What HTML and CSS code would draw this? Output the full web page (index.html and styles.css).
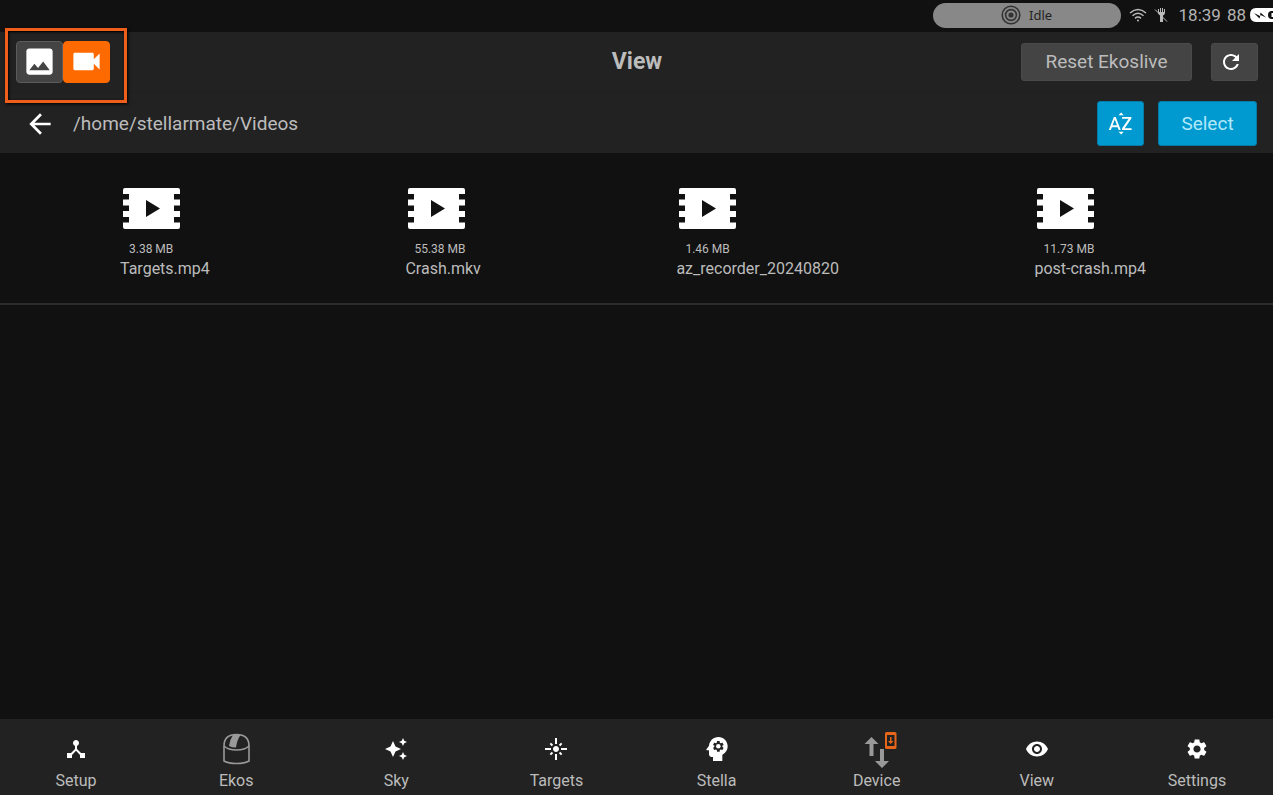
FILE: index.html
```html
<!DOCTYPE html>
<html lang="en">
<head>
<meta charset="utf-8">
<meta name="viewport" content="width=device-width, initial-scale=1">
<title>View</title>
<link rel="stylesheet" href="styles.css">
</head>
<body>
<svg class="defs" aria-hidden="true">
  <symbol id="film" viewBox="0 0 57 41">
    <path fill-rule="evenodd" d="M2 0H55Q57 0 57 2V6H51V11.500H57V17.500H51V23H57V29H51V34.500H57V39Q57 41 55 41H2Q0 41 0 39V34.500H6V29H0V23H6V17.500H0V11.500H6V6H0V2Q0 0 2 0ZM23 12V29L37 20.500Z"/>
  </symbol>
</svg>
<div class="status">
  <div class="pill">
    <svg class="icon-target" viewBox="0 0 20 20"><circle cx="10" cy="10" r="8.800"/><circle cx="10" cy="10" r="5.400"/><circle class="dot" cx="10" cy="10" r="2.600"/></svg>
    <span>Idle</span>
  </div>
  <svg class="icon-wifi" viewBox="0 0 18 14"><path d="M1 5Q9 -2 17 5M3.500 7.800Q9 2.800 14.500 7.800M6 10.300Q9 7.800 12 10.300"/><circle cx="9" cy="12.500" r="1"/></svg>
  <svg class="icon-mute" viewBox="0 0 14 15"><path class="fill" d="M4 1H5V4H6V0H7V4H8V0H9V4H10V1H11V5Q10.500 7 9 7.500V14H6V7.500Q4 7 4 4Z"/><path d="M1 1.500L13 13.500"/></svg>
  <span class="clock">18:39</span>
  <span class="charge">88</span>
  <svg class="icon-battery" viewBox="0 0 23 14"><path class="shell" d="M6 0H23V14H6Q0 14 0 7Q0 0 6 0Z"/><path d="M4 5L10 8L10.500 4.500L16 9.500L10.500 7L9.500 10.500Z"/><path d="M23 3H21Q18 3.500 18 7Q18 10.500 21 11H23V9H21.500V5H23Z"/></svg>
</div>
<header class="header">
  <div class="toolbar">
    <div class="switch">
      <button class="btn mode" aria-label="Images"><svg class="icon-mode" viewBox="0 0 24 24"><path d="M21 19V5c0-1.100-.9-2-2-2H5c-1.100 0-2 .9-2 2v14c0 1.100.9 2 2 2h14c1.100 0 2-.9 2-2zM8.500 13.500l2.500 3.010L14.500 12l4.500 6H5l3.500-4.500z"/></svg></button>
      <button class="btn mode active" aria-label="Videos"><svg class="icon-mode" viewBox="0 0 24 24"><path d="M17 10.500V7c0-.55-.45-1-1-1H4c-.55 0-1 .45-1 1v10c0 .55.45 1 1 1h12c.55 0 1-.45 1-1v-3.500l4 4v-11l-4 4z"/></svg></button>
    </div>
    <h1 class="title">View</h1>
    <div class="actions">
      <button class="btn reset">Reset Ekoslive</button>
      <button class="btn refresh" aria-label="Refresh"><svg class="icon" viewBox="0 0 24 24"><path d="M17.650 6.350C16.200 4.900 14.210 4 12 4c-4.420 0-7.990 3.580-7.990 8s3.570 8 7.990 8c3.730 0 6.840-2.550 7.730-6h-2.080c-.82 2.330-3.040 4-5.650 4-3.310 0-6-2.690-6-6s2.690-6 6-6c1.660 0 3.140.69 4.220 1.780L13 11h7V4l-2.350 2.350z"/></svg></button>
    </div>
  </div>
  <div class="pathbar">
    <button class="back" aria-label="Back"><svg class="icon-large" viewBox="0 0 24 24"><path d="M20 11H7.830l5.590-5.590L12 4l-8 8 8 8 1.410-1.410L7.830 13H20v-2z"/></svg></button>
    <span class="path">/home/stellarmate/Videos</span>
    <button class="btn blue sort" aria-label="Sort by name"><svg class="icon-sort" viewBox="0 0 24 24"><path d="M14.940 4.660h-4.720l2.360-2.360 2.360 2.360zm-4.690 14.710h4.660l-2.330 2.330-2.330-2.330zM6.100 6.270L1.600 17.730h1.840l.92-2.450h5.110l.92 2.450h1.840L7.740 6.270H6.100zm-1.130 7.370l1.940-5.180 1.940 5.180H4.970zm10.760 2.500h6.120v1.590h-8.530v-1.290l5.920-8.560h-5.880v-1.600h8.300v1.260l-5.930 8.600z"/></svg></button>
    <button class="btn blue select">Select</button>
  </div>
  <div class="highlight"></div>
</header>
<main class="content">
  <ul class="files">
    <li class="file"><svg class="icon-film"><use href="#film"/></svg><span class="size">3.38 MB</span><span class="name">Targets.mp4</span></li>
    <li class="file"><svg class="icon-film"><use href="#film"/></svg><span class="size">55.38 MB</span><span class="name">Crash.mkv</span></li>
    <li class="file"><svg class="icon-film"><use href="#film"/></svg><span class="size">1.46 MB</span><span class="name">az_recorder_20240820</span></li>
    <li class="file"><svg class="icon-film"><use href="#film"/></svg><span class="size">11.73 MB</span><span class="name">post-crash.mp4</span></li>
  </ul>
</main>
<nav class="nav">
  <div class="tabs">
    <button class="tab"><span class="glyph"><svg class="icon" viewBox="0 0 24 24"><path d="M17 16l-4-4V8.820C14.160 8.400 15 7.300 15 6c0-1.660-1.340-3-3-3S9 4.340 9 6c0 1.300.84 2.400 2 2.820V12l-4 4H3v5h5v-3.050l4-4.200 4 4.200V21h5v-5h-4z"/></svg></span>Setup</button>
    <button class="tab"><span class="glyph"><svg class="icon-large" viewBox="0 0 32 32"><g class="line"><path d="M4 13C4 5 9 1.500 16.500 1.500S29 5 29 13V28Q25 30.500 16.500 30.500T4 28Z"/><path d="M4 13Q8 17 16.500 17T29 13"/></g><path class="grey" d="M13 2H20.500Q17 7 16 14.500Q12 14.500 9 13Q9.500 7 13 2Z"/></svg></span>Ekos</button>
    <button class="tab"><span class="glyph"><svg class="icon" viewBox="0 0 24 24"><path d="M19 1L17.740 3.750L15 5L17.740 6.260L19 9L20.250 6.260L23 5L20.250 3.750ZM9 4L6.500 9.500L1 12L6.500 14.500L9 20L11.500 14.500L17 12L11.500 9.500ZM19 15L17.740 17.740L15 19L17.740 20.250L19 23L20.250 20.250L23 19L20.250 17.740Z"/></svg></span>Sky</button>
    <button class="tab"><span class="glyph"><svg class="icon" viewBox="0 0 24 24"><path d="M7 11H1v2h6v-2zm2.170-3.240L7.050 5.640 5.640 7.050l2.120 2.120 1.410-1.410zM13 1h-2v6h2V1zm5.360 6.050l-1.410-1.410-2.120 2.120 1.410 1.410 2.120-2.120zM17 11v2h6v-2h-6zm-5-2c-1.660 0-3 1.340-3 3s1.340 3 3 3 3-1.340 3-3-1.340-3-3-3zm2.830 7.240l2.120 2.120 1.410-1.410-2.120-2.120-1.410 1.410zm-9.190.71l1.410 1.410 2.120-2.120-1.410-1.410-2.120 2.120zM11 23h2v-6h-2v6z"/></svg></span>Targets</button>
    <button class="tab"><span class="glyph"><svg class="icon-large" viewBox="0 0 24 24"><path fill-rule="evenodd" d="M13 3C9.250 3 6.200 5.940 6.020 9.640L4.100 12.200C3.850 12.530 4.090 13 4.500 13H6v3c0 1.100.9 2 2 2h1v3h7v-4.680c2.360-1.120 4-3.530 4-6.320 0-3.870-3.130-7-7-7zm3 7c0 .13-.01.26-.02.39l.83.66c.08.06.1.16.05.25l-.8 1.390c-.05.09-.16.12-.24.09l-.99-.4c-.21.16-.43.29-.67.39L14 13.830c-.01.1-.1.17-.2.17h-1.600c-.1 0-.18-.07-.2-.17l-.15-1.060c-.25-.1-.47-.23-.68-.39l-.99.4c-.09.03-.2 0-.25-.09l-.8-1.390c-.05-.08-.03-.19.05-.25l.84-.66C10.010 10.260 10 10.130 10 10s.02-.27.04-.39l-.85-.66c-.08-.06-.1-.16-.05-.26l.8-1.380c.05-.09.15-.12.24-.09l1 .4c.2-.15.43-.29.67-.39L12 6.170c.02-.1.1-.17.2-.17h1.600c.1 0 .18.07.2.17l.15 1.060c.24.1.46.23.67.39l1-.4c.09-.03.2 0 .24.09l.8 1.380c.05.09.03.2-.05.26l-.85.66c.03.12.04.25.04.39z"/><circle cx="13" cy="10" r="1.700"/></svg></span>Stella</button>
    <button class="tab"><span class="glyph"><svg class="icon-large" viewBox="0 0 32 32"><path class="grey" d="M10.500 4L17.500 11H12.500V23H8.500V11H3.500ZM19 16H23V28H28L21 35L14 28H19Z"/><path class="orange" fill-rule="evenodd" d="M25.500 -1H34Q35.500 -1 35.500 .5V14.500Q35.500 16 34 16H25.500Q24 16 24 14.500V.5Q24 -1 25.500 -1ZM26 2V13H33.500V2ZM29 4H30.500V8H32.500L29.750 11L27 8H29Z"/></svg></span>Device</button>
    <button class="tab"><span class="glyph"><svg class="icon" viewBox="0 0 24 24"><path d="M12 4.500C7 4.500 2.730 7.610 1 12c1.730 4.390 6 7.500 11 7.500s9.270-3.110 11-7.500c-1.730-4.390-6-7.500-11-7.500zM12 17c-2.760 0-5-2.240-5-5s2.240-5 5-5 5 2.240 5 5-2.240 5-5 5zm0-8c-1.660 0-3 1.340-3 3s1.340 3 3 3 3-1.340 3-3-1.340-3-3-3z"/></svg></span>View</button>
    <button class="tab"><span class="glyph"><svg class="icon" viewBox="0 0 24 24"><path d="M19.140 12.940c.04-.3.06-.61.06-.94 0-.32-.02-.64-.07-.94l2.030-1.580c.18-.14.23-.41.12-.61l-1.920-3.320c-.12-.22-.37-.29-.59-.22l-2.390.96c-.5-.38-1.030-.7-1.620-.94l-.36-2.540c-.04-.24-.24-.41-.48-.41h-3.840c-.24 0-.43.17-.47.41l-.36 2.540c-.59.24-1.130.57-1.620.94l-2.390-.96c-.22-.08-.47 0-.59.22L2.740 8.870c-.12.21-.08.47.12.61l2.030 1.580c-.05.3-.09.63-.09.94s.02.64.07.94l-2.030 1.580c-.18.14-.23.41-.12.61l1.920 3.320c.12.22.37.29.59.22l2.390-.96c.5.38 1.030.7 1.620.94l.36 2.540c.05.24.24.41.48.41h3.840c.24 0 .44-.17.47-.41l.36-2.540c.59-.24 1.130-.56 1.620-.94l2.390.96c.22.08.47 0 .59-.22l1.920-3.320c.12-.22.07-.47-.12-.61l-2.010-1.580zM12 15.600c-1.980 0-3.600-1.620-3.600-3.600s1.620-3.600 3.600-3.600 3.600 1.620 3.600 3.600-1.620 3.600-3.600 3.600z"/></svg></span>Settings</button>
  </div>
</nav>
</body>
</html>
```

FILE: styles.css
```css
* { box-sizing: border-box; }
body {
  margin: 0;
  min-height: 100vh;
  display: flex;
  flex-direction: column;
  overflow-x: hidden;
  background: #111;
  color: #bcbcbc;
  font-family: Roboto, "Liberation Sans", sans-serif;
  font-size: 16px;
}
button { margin: 0; padding: 0; border: 0; background: none; color: inherit; font: inherit; }
svg { display: block; flex: none; fill: #fff; overflow: visible; }
.defs { position: absolute; width: 0; height: 0; }
.icon { width: 24px; height: 24px; }
.icon-sort { width: 27px; height: 27px; }
.icon-large { width: 32px; height: 32px; }
.icon-mode { width: 35px; height: 35px; }

.status { display: flex; align-items: center; height: 32px; padding-bottom: 2px; color: #b4b4b4; font-size: 17px; }
.pill {
  display: flex; align-items: center; justify-content: center; gap: 8px;
  width: 188px; height: 25px; margin-left: auto; margin-right: 8px;
  border-radius: 13px; background: #888; color: #222;
  font-family: "Noto Sans", sans-serif; font-size: 13px;
}
.icon-target { width: 20px; height: 20px; fill: none; stroke: #333; stroke-width: 1.6; }
.icon-target .dot { fill: #333; stroke: none; }
.icon-wifi { width: 18px; height: 14px; margin-right: 7px; fill: #bbb; }
.icon-wifi path { fill: none; stroke: #bbb; stroke-width: 1.5; }
.icon-mute { width: 14px; height: 15px; margin-right: 11px; fill: #bbb; stroke: #bbb; stroke-width: 1; }
.icon-mute .fill { stroke: none; }
.clock { margin-right: 6px; }
.charge { margin-right: 4px; }
.icon-battery { width: 23px; height: 14px; fill: #111; }
.icon-battery .shell { fill: #fff; }

.header { position: relative; background: #222; }
.toolbar { display: grid; grid-template-columns: 1fr auto 1fr; align-items: center; height: 60px; padding: 0 15px 0 16px; border-bottom: 1px solid #202020; }
.switch { display: flex; }
.btn { display: flex; align-items: center; justify-content: center; border: 1px solid #4a4a4a; border-radius: 3px; background: #444; font-size: 19px; }
.mode { width: 47px; height: 42px; border-color: #5c5c5c; border-radius: 4px; }
.mode.active { border-color: #ff6a00; background: #ff6a00; }
.title { margin: 0; font-size: 23px; line-height: 28px; font-weight: 700; }
.actions { display: flex; justify-content: flex-end; gap: 19px; }
.reset { width: 171px; height: 38px; }
.refresh { width: 47px; height: 38px; padding-right: 8px; }
.pathbar { display: flex; align-items: center; height: 61px; padding: 2px 16px 0 24px; }
.back { margin-right: 17px; }
.path { margin-right: auto; font-size: 19px; }
.blue { height: 45px; border-color: #067ba5; background: #0099d0; color: #b0e8fb; }
.sort { width: 47px; margin-right: 14px; }
.select { width: 99px; }
.highlight { position: absolute; left: 5px; top: -4px; width: 122px; height: 75px; border: 3px solid #f05e1c; box-shadow: 1px 1px 3px #000, inset 1px 1px 3px #000; pointer-events: none; }

.content { flex: 1; }
.files { display: flex; justify-content: space-between; margin: 0; padding: 35px 127px 24px 120px; border-bottom: 2px solid #2c2c2c; list-style: none; }
.file { display: flex; flex-direction: column; }
.icon-film { width: 57px; height: 41px; margin: 0 3px 12px; }
.size { margin-left: 9px; font-size: 12px; line-height: 16px; }
.name { margin-top: 2px; line-height: 20px; }

.nav { overflow: hidden; background: #222; }
.tabs { display: grid; grid-template-columns: repeat(8, 1fr); margin: 0 -4px; }
.tab { display: flex; flex-direction: column; align-items: center; height: 76px; padding-top: 14px; line-height: 20px; }
.glyph { display: flex; align-items: center; justify-content: center; height: 32px; margin-bottom: 6px; }
.line { fill: none; stroke: #999; stroke-width: 1.6; }
.grey { fill: #999; }
.orange { fill: #e8651a; }
```
